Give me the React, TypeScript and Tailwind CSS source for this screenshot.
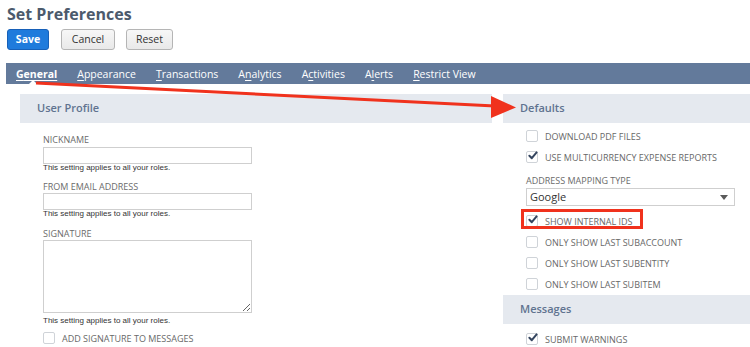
import React from "react";

function Box({ checked }: { checked?: boolean }) {
  return (
    <span className="relative flex h-[12px] w-[12px] shrink-0 items-center justify-center rounded-[2px] border border-[#cfd3d8] bg-white">
      {checked && (
        <svg width="10" height="9" viewBox="0 0 10 9" className="absolute left-[1px] top-[-1px]">
          <path d="M1.4 4.8 L3.8 7.2 L8.6 1.4" fill="none" stroke="#34455f" strokeWidth="2" strokeLinecap="round" strokeLinejoin="round" />
        </svg>
      )}
    </span>
  );
}

function CheckRow({ label, checked, children }: { label: string; checked?: boolean; children?: React.ReactNode }) {
  return (
    <div className="relative flex h-[21px] items-center">
      <Box checked={checked} />
      <span className="ml-[7px] mt-[2px] text-[9px] leading-[12px] text-[#686868]">{label}</span>
      {children}
    </div>
  );
}

function Header({ title }: { title: string }) {
  return (
    <div className="flex h-[29px] items-center bg-[#e5e9ef] pl-[17px] text-[11px] font-semibold text-[#60738f]">
      {title}
    </div>
  );
}

function Label({ text, className = "" }: { text: string; className?: string }) {
  return <div className={`text-[9px] leading-[12px] text-[#6b6b6b] ${className}`}>{text}</div>;
}

function Help({ className = "" }: { className?: string }) {
  return (
    <div className={`font-['Liberation_Sans',Arial,sans-serif] text-[8px] leading-[8px] text-[#333] ${className}`}>
      This setting applies to all your roles.
    </div>
  );
}

function Tab({ pre, key1, post, active }: { pre?: string; key1: string; post: string; active?: boolean }) {
  return (
    <span className={`text-[10.5px] leading-[14px] text-white ${active ? "font-bold underline underline-offset-2" : ""}`}>
      {pre}
      <span className="underline underline-offset-2">{key1}</span>
      {post}
    </span>
  );
}

export default function App() {
  return (
    <div className="relative h-[347px] w-[750px] overflow-hidden bg-white font-['Open_Sans','Noto_Sans',sans-serif]">
      <div className="pl-[7px]">
        <h1 className="pt-[3px] text-[16px] font-bold leading-[22px] text-[#4c5a6c]">Set Preferences</h1>
        <div className="mt-[4px] flex">
          <button className="h-[21px] w-[42px] rounded-[3px] border border-[#1760b8] bg-[#1f7bdc] text-[10.5px] font-bold text-white">
            Save
          </button>
          <button className="ml-[12px] h-[21px] w-[54px] rounded-[3px] border border-[#b5b5b5] bg-gradient-to-b from-[#f7f7f7] to-[#e9e9e9] text-[10.5px] text-[#333]">
            Cancel
          </button>
          <button className="ml-[11px] h-[21px] w-[47px] rounded-[3px] border border-[#b5b5b5] bg-gradient-to-b from-[#f7f7f7] to-[#e9e9e9] text-[10.5px] text-[#333]">
            Reset
          </button>
        </div>
      </div>
      <div className="relative ml-[6px] mt-[13px] flex h-[21px] items-center gap-[20px] bg-[#637a9b] pl-[10px]">
        <Tab key1="G" post="eneral" active />
        <Tab key1="A" post="ppearance" />
        <Tab key1="T" post="ransactions" />
        <Tab pre="A" key1="n" post="alytics" />
        <Tab pre="A" key1="c" post="tivities" />
        <Tab pre="A" key1="l" post="erts" />
        <Tab key1="R" post="estrict View" />
        <span className="absolute bottom-0 left-[23px] h-0 w-0 border-x-[4px] border-b-[4px] border-x-transparent border-b-white" />
      </div>
      <div className="mt-[10px] flex">
        <div className="ml-[20px] w-[472px]">
          <Header title="User Profile" />
          <div className="pl-[23px]">
            <Label text="NICKNAME" className="mt-[11px]" />
            <input readOnly className="mt-[1px] block h-[17px] w-[209px] border border-[#cfcfcf] bg-white" />
            <Help />
            <Label text="FROM EMAIL ADDRESS" className="mt-[9px]" />
            <input readOnly className="block h-[17px] w-[209px] border border-[#cfcfcf] bg-white" />
            <Help />
            <Label text="SIGNATURE" className="mt-[10px]" />
            <textarea readOnly className="block h-[73px] w-[209px] border border-[#cfcfcf] bg-white" />
            <Help className="mt-[4px]" />
            <div className="mt-[2px]">
              <CheckRow label="ADD SIGNATURE TO MESSAGES" />
            </div>
          </div>
        </div>
        <div className="ml-[11px] flex-1">
          <Header title="Defaults" />
          <div className="mt-[2px] pl-[23px]">
            <CheckRow label="DOWNLOAD PDF FILES" />
            <CheckRow label="USE MULTICURRENCY EXPENSE REPORTS" checked />
            <Label text="ADDRESS MAPPING TYPE" className="mt-[8px]" />
            <div className="mt-[1px] flex h-[18px] w-[209px] items-center justify-between border border-[#cfcfcf] bg-white pl-[3px] pr-[6px]">
              <span className="text-[11px] text-[#333]">Google</span>
              <span className="h-0 w-0 border-x-[4px] border-t-[5px] border-x-transparent border-t-[#5a5a5a]" />
            </div>
            <div className="mt-[4px]">
              <CheckRow label="SHOW INTERNAL IDS" checked>
                <span className="pointer-events-none absolute left-[-5px] top-[-1px] h-[20px] w-[122px] border-[3px] border-[#f0321d]" />
              </CheckRow>
            </div>
            <CheckRow label="ONLY SHOW LAST SUBACCOUNT" />
            <CheckRow label="ONLY SHOW LAST SUBENTITY" />
            <CheckRow label="ONLY SHOW LAST SUBITEM" />
          </div>
          <div className="mt-[1px]">
            <Header title="Messages" />
          </div>
          <div className="mt-[4px] pl-[23px]">
            <CheckRow label="SUBMIT WARNINGS" checked />
          </div>
        </div>
      </div>
      <svg className="pointer-events-none absolute left-0 top-0" width="750" height="347" viewBox="0 0 750 347">
        <line x1="36" y1="83" x2="495" y2="106" stroke="#f0321d" strokeWidth="3" />
        <polygon points="491,96 516,107.5 491,118" fill="#f0321d" />
      </svg>
    </div>
  );
}
